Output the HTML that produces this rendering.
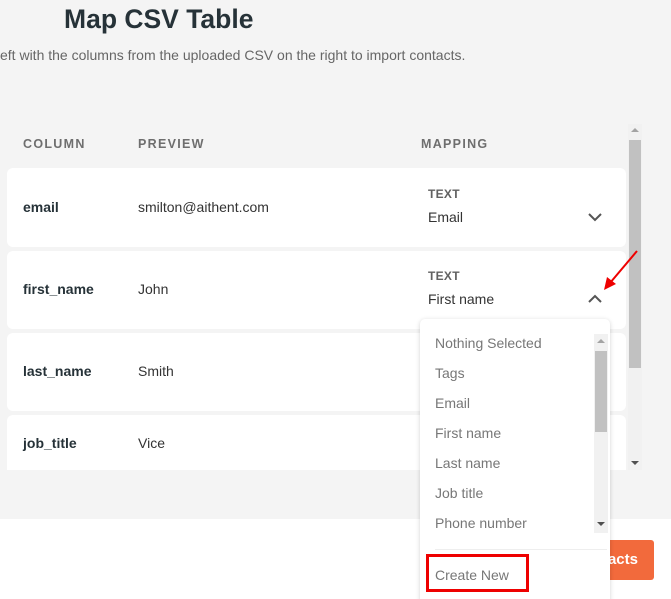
<!DOCTYPE html><html><head><style>
*{margin:0;padding:0;box-sizing:border-box}
html,body{width:671px;height:599px;overflow:hidden}
body{background:#fff;font-family:"Liberation Sans",Roboto,sans-serif;position:relative}
.bg{position:absolute;left:0;top:0;width:671px;height:519px;background:#f4f4f4}
.a{position:absolute;white-space:nowrap}
h1{position:absolute;left:64px;top:4px;font-size:26.5px;font-weight:bold;color:#263238}
.sub{left:0;top:47px;font-size:14px;color:#666}
.hd{top:137px;font-size:12.5px;font-weight:bold;letter-spacing:1.3px;color:#6e6e6e}
.card{position:absolute;left:7px;width:619px;background:#fff;border-radius:6px}
.k{left:23px;font-size:14px;font-weight:bold;color:#263238}
.v{left:138px;font-size:14px;color:#333}
.t{left:428px;font-size:12px;font-weight:bold;color:#616161;letter-spacing:.3px}
.m{left:428px;font-size:14px;color:#333}
.dd{position:absolute;left:420px;top:319px;width:190px;height:290px;background:#fff;border-radius:5px;box-shadow:0 1px 5px rgba(0,0,0,.18)}
.it{left:435px;font-size:14px;color:#777}
</style></head><body>
<div class="bg"></div>
<h1>Map CSV Table</h1>
<div class="a sub">eft with the columns from the uploaded CSV on the right to import contacts.</div>
<div class="a hd" style="left:23px">COLUMN</div>
<div class="a hd" style="left:138px">PREVIEW</div>
<div class="a hd" style="left:421px">MAPPING</div>
<div class="card" style="top:168px;height:79px"></div>
<div class="card" style="top:251px;height:78px"></div>
<div class="card" style="top:333px;height:78px"></div>
<div class="card" style="top:415px;height:55px;border-radius:6px 6px 0 0"></div>
<div class="a k" style="top:199px">email</div><div class="a v" style="top:199px">smilton@aithent.com</div>
<div class="a t" style="top:187px">TEXT</div><div class="a m" style="top:209px">Email</div>
<svg class="a" style="left:588px;top:212px" width="14" height="10"><path d="M1 2l6 6 6-6" stroke="#555" stroke-width="2" fill="none"/></svg>
<div class="a k" style="top:281px">first_name</div><div class="a v" style="top:281px">John</div>
<div class="a t" style="top:269px">TEXT</div><div class="a m" style="top:291px">First name</div>
<svg class="a" style="left:588px;top:294px" width="14" height="10"><path d="M1 8l6-6 6 6" stroke="#555" stroke-width="2" fill="none"/></svg>
<div class="a k" style="top:363px">last_name</div><div class="a v" style="top:363px">Smith</div>
<div class="a k" style="top:435px">job_title</div><div class="a v" style="top:435px">Vice</div>
<div class="a" style="left:628px;top:124px;width:14px;height:346px;background:#f1f1f1"></div>
<div class="a" style="left:629px;top:140px;width:12px;height:228px;background:#c1c1c1"></div>
<div class="a" style="left:631px;top:128px;border:4px solid transparent;border-bottom-color:#a3a3a3;border-top:0"></div>
<div class="a" style="left:631px;top:461px;border:4px solid transparent;border-top-color:#505050;border-bottom:0"></div>
<svg class="a" style="left:600px;top:248px" width="40" height="60"><path d="M37 3L10 35" stroke="#e00" stroke-width="2"/><path d="M4 42l3-13 9 7z" fill="#e00"/></svg>
<div class="a" style="left:575px;top:540px;width:79px;height:40px;background:#f26a3c;border-radius:3px;color:#fff;font-weight:bold;font-size:15px;line-height:40px;text-align:right;padding-right:16px">acts</div>
<div class="dd"></div>
<div class="a it" style="top:335px">Nothing Selected</div>
<div class="a it" style="top:365px">Tags</div>
<div class="a it" style="top:395px">Email</div>
<div class="a it" style="top:425px">First name</div>
<div class="a it" style="top:455px">Last name</div>
<div class="a it" style="top:485px">Job title</div>
<div class="a it" style="top:515px">Phone number</div>
<div class="a" style="left:594px;top:334px;width:14px;height:199px;background:#f1f1f1"></div>
<div class="a" style="left:595px;top:351px;width:12px;height:81px;background:#c1c1c1"></div>
<div class="a" style="left:597px;top:339px;border:4px solid transparent;border-bottom-color:#a3a3a3;border-top:0"></div>
<div class="a" style="left:597px;top:522px;border:4px solid transparent;border-top-color:#505050;border-bottom:0"></div>
<div class="a" style="left:435px;top:549px;width:172px;height:1px;background:#eee"></div>
<div class="a" style="left:426px;top:554px;width:103px;height:38px;border:3px solid #e00"></div>
<div class="a it" style="top:567px">Create New</div>
</body></html>
